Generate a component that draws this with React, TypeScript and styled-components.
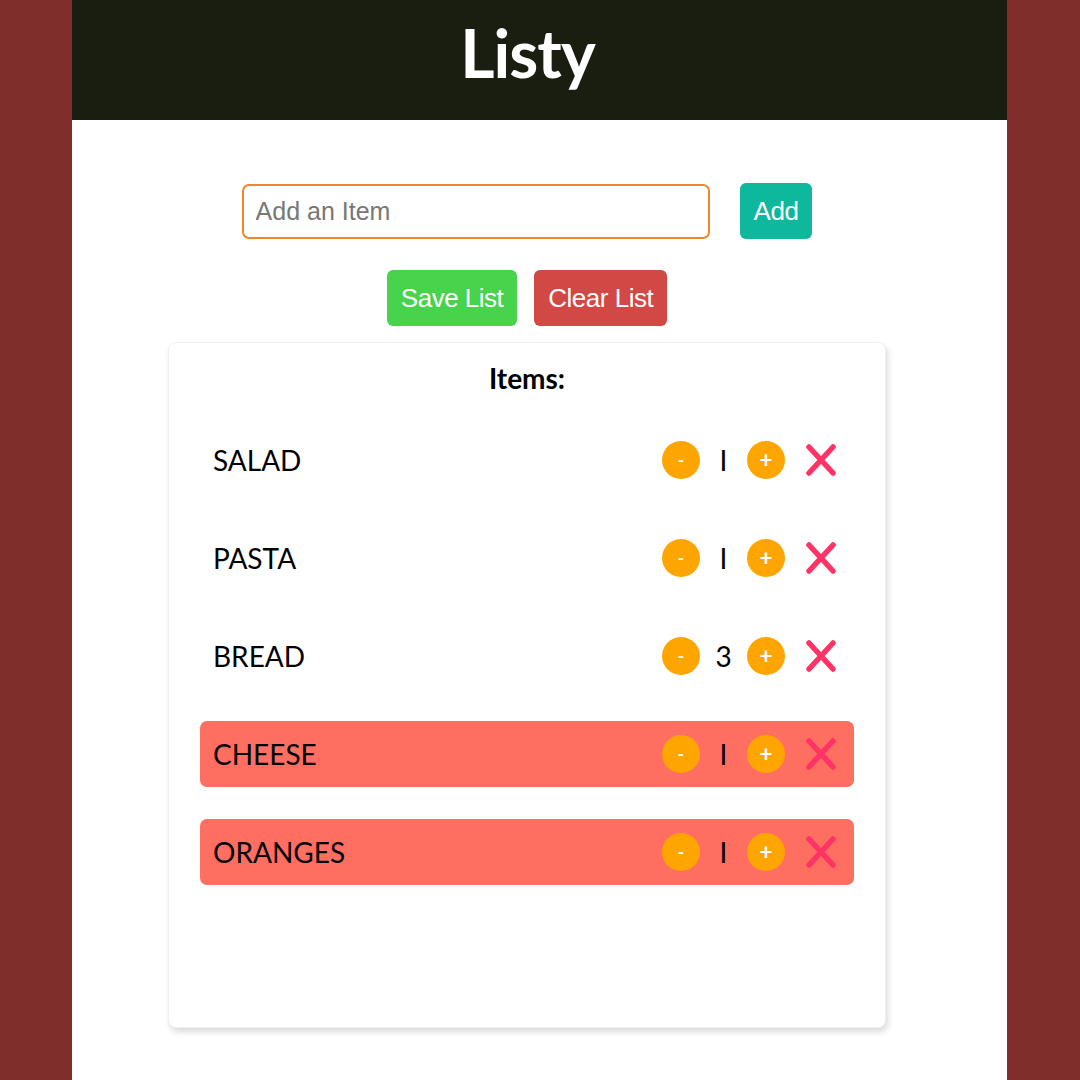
import React from "react";
import styled, { createGlobalStyle } from "styled-components";

const Global = createGlobalStyle`
  html, body { margin: 0; padding: 0; background: #7f2e2b; }
  body { font-family: "Lato", "Open Sans", sans-serif; }
`;

const Page = styled.div`
  width: 935px;
  min-height: 1080px;
  margin: 0 0 0 72px;
  background: #ffffff;
  display: flex;
  flex-direction: column;
`;

const Header = styled.header`
  height: 120px;
  background: #1a1e11;
  display: flex;
  align-items: center;
  justify-content: center;
  padding-right: 24px;
`;

const Title = styled.h1`
  margin: 0 0 14px 0;
  color: #ffffff;
  font-family: "Lato", sans-serif;
  font-weight: 700;
  font-size: 66px;
  line-height: 1;
  letter-spacing: -1px;
`;

const Main = styled.main`
  display: flex;
  flex-direction: column;
  align-items: center;
  padding: 63px 25px 0 0;
`;

const FormRow = styled.div`
  display: flex;
  align-items: center;
  gap: 30px;
`;

const Input = styled.input`
  box-sizing: border-box;
  width: 468px;
  height: 55px;
  border: 2px solid #f0862c;
  border-radius: 7px;
  padding: 0 12px;
  font-family: "Liberation Sans", Arial, sans-serif;
  font-size: 25px;
  color: #333;
  outline: none;
  &::placeholder { color: #777777; }
`;

const Button = styled.button<{ $bg: string }>`
  box-sizing: border-box;
  height: 56px;
  padding: 0 14px;
  border: none;
  border-radius: 6px;
  background: ${(p) => p.$bg};
  color: #ffffff;
  font-family: "Liberation Sans", Arial, sans-serif;
  font-size: 26px;
  letter-spacing: -0.5px;
  cursor: pointer;
`;

const ActionRow = styled.div`
  display: flex;
  gap: 17px;
  margin-top: 31px;
`;

const Card = styled.section`
  box-sizing: border-box;
  width: 718px;
  height: 686px;
  margin-top: 16px;
  padding: 20px 31px;
  background: #ffffff;
  border-radius: 8px;
  border: 1px solid #f0f0f0;
  box-shadow: 2px 4px 6px rgba(0, 0, 0, 0.14);
  display: flex;
  flex-direction: column;
`;

const CardTitle = styled.h2`
  margin: 0 0 34px 0;
  text-align: center;
  font-family: "Lato", sans-serif;
  font-weight: 700;
  font-size: 28px;
  line-height: 30px;
  color: #000;
`;

const List = styled.ul`
  list-style: none;
  margin: 0;
  padding: 0;
  display: flex;
  flex-direction: column;
  gap: 32px;
`;

const Row = styled.li<{ $done: boolean }>`
  height: 66px;
  display: flex;
  align-items: center;
  padding: 0 17px 0 13px;
  border-radius: 7px;
  background: ${(p) => (p.$done ? "#ff6f61" : "transparent")};
`;

const Name = styled.span`
  flex: 1;
  font-family: "Lato", sans-serif;
  font-size: 28px;
  color: #000;
  text-transform: uppercase;
`;

const Circle = styled.button<{ $big?: boolean }>`
  width: 38px;
  height: 38px;
  border-radius: 50%;
  border: none;
  padding: 0 0 2px 0;
  background: #ffa500;
  color: #ffffff;
  font-family: "Lato", sans-serif;
  font-size: ${(p) => (p.$big ? "23px" : "17px")};
  font-weight: 700;
  line-height: 1;
  display: flex;
  align-items: center;
  justify-content: center;
  cursor: pointer;
`;

const Count = styled.span`
  width: 47px;
  text-align: center;
  font-family: "Lato", sans-serif;
  font-size: 28px;
  color: #000;
`;

const Remove = styled.button`
  width: 32px;
  height: 32px;
  margin-left: 20px;
  padding: 0;
  border: none;
  background: transparent;
  display: flex;
  align-items: center;
  justify-content: center;
  cursor: pointer;
`;

const items = [
  { name: "Salad", qty: "I", done: false },
  { name: "Pasta", qty: "I", done: false },
  { name: "Bread", qty: "3", done: false },
  { name: "Cheese", qty: "I", done: true },
  { name: "Oranges", qty: "I", done: true },
];

const XIcon = () => (
  <svg width="32" height="32" viewBox="0 0 32 32">
    <path
      d="M4 3 L28 29 M28 3 L4 29"
      stroke="#ff3366"
      strokeWidth="5.5"
      strokeLinecap="round"
      fill="none"
    />
  </svg>
);

export default function App() {
  return (
    <>
      <Global />
      <Page>
        <Header>
          <Title>Listy</Title>
        </Header>
        <Main>
          <FormRow>
            <Input placeholder="Add an Item" />
            <Button $bg="#0db89c">Add</Button>
          </FormRow>
          <ActionRow>
            <Button $bg="#48d34c">Save List</Button>
            <Button $bg="#d24844">Clear List</Button>
          </ActionRow>
          <Card>
            <CardTitle>Items:</CardTitle>
            <List>
              {items.map((it) => (
                <Row key={it.name} $done={it.done}>
                  <Name>{it.name}</Name>
                  <Circle>-</Circle>
                  <Count>{it.qty}</Count>
                  <Circle $big>+</Circle>
                  <Remove>
                    <XIcon />
                  </Remove>
                </Row>
              ))}
            </List>
          </Card>
        </Main>
      </Page>
    </>
  );
}
